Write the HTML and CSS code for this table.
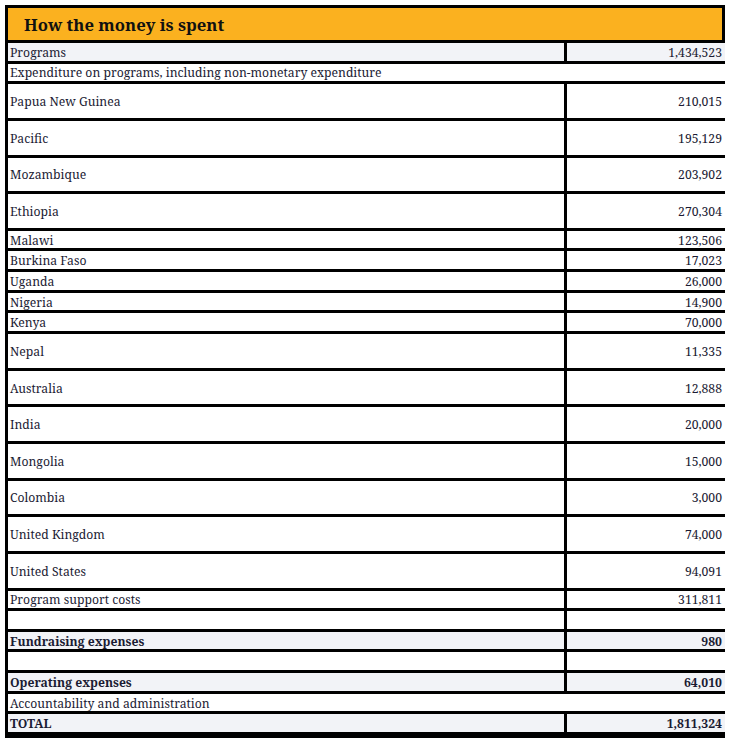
FILE: index.html
```html
<!DOCTYPE html>
<html lang="en">
<head>
<meta charset="utf-8">
<title>How the money is spent</title>
<link rel="stylesheet" href="styles.css">
</head>
<body>
<div class="sheet">
  <div class="title">How the money is spent</div>
  <div class="row alt"><div class="label">Programs</div><div class="num">1,434,523</div></div>
  <div class="row full"><div class="label">Expenditure on programs, including non-monetary expenditure</div></div>
  <div class="row tall"><div class="label">Papua New Guinea</div><div class="num">210,015</div></div>
  <div class="row tall"><div class="label">Pacific</div><div class="num">195,129</div></div>
  <div class="row tall"><div class="label">Mozambique</div><div class="num">203,902</div></div>
  <div class="row tall"><div class="label">Ethiopia</div><div class="num">270,304</div></div>
  <div class="row"><div class="label">Malawi</div><div class="num">123,506</div></div>
  <div class="row"><div class="label">Burkina Faso</div><div class="num">17,023</div></div>
  <div class="row"><div class="label">Uganda</div><div class="num">26,000</div></div>
  <div class="row"><div class="label">Nigeria</div><div class="num">14,900</div></div>
  <div class="row"><div class="label">Kenya</div><div class="num">70,000</div></div>
  <div class="row tall"><div class="label">Nepal</div><div class="num">11,335</div></div>
  <div class="row tall"><div class="label">Australia</div><div class="num">12,888</div></div>
  <div class="row tall"><div class="label">India</div><div class="num">20,000</div></div>
  <div class="row tall"><div class="label">Mongolia</div><div class="num">15,000</div></div>
  <div class="row tall"><div class="label">Colombia</div><div class="num">3,000</div></div>
  <div class="row tall"><div class="label">United Kingdom</div><div class="num">74,000</div></div>
  <div class="row tall"><div class="label">United States</div><div class="num">94,091</div></div>
  <div class="row"><div class="label">Program support costs</div><div class="num">311,811</div></div>
  <div class="row"><div class="label"></div><div class="num"></div></div>
  <div class="row alt bold"><div class="label">Fundraising expenses</div><div class="num">980</div></div>
  <div class="row"><div class="label"></div><div class="num"></div></div>
  <div class="row alt bold"><div class="label">Operating expenses</div><div class="num">64,010</div></div>
  <div class="row full"><div class="label">Accountability and administration</div></div>
  <div class="row alt bold"><div class="label">TOTAL</div><div class="num">1,811,324</div></div>
</div>
</body>
</html>
```

FILE: styles.css
```css
html, body {
  margin: 0;
  padding: 0;
  background: #ffffff;
}

.sheet {
  margin: 5px 0 0 5px;
  width: 717px;
  border-left: 3px solid #000;
  border-bottom: 3px solid #000;
  font-family: "Noto Serif", "DejaVu Serif Condensed", "DejaVu Serif", serif;
  font-size: 12.2px;
  color: #1b1b33;
}

.title {
  box-sizing: border-box;
  height: 38px;
  margin-left: -3px;
  width: 720px;
  border: 3px solid #000;
  background: #fbb11f;
  color: #111;
  font-weight: bold;
  font-size: 16.7px;
  padding-left: 16px;
  display: flex;
  align-items: center;
}

.row {
  display: flex;
  height: 20.65px;
  box-sizing: border-box;
  border-bottom: 3px solid #000;
  background: #fff;
}

.row.tall {
  height: 36.65px;
}

.row.alt {
  background: #f2f3f7;
}

.row.bold {
  font-weight: bold;
}

.label {
  box-sizing: border-box;
  width: 559px;
  border-right: 3px solid #000;
  padding: 1px 0 0 2px;
  display: flex;
  align-items: center;
  white-space: nowrap;
}

.row.full .label {
  width: 100%;
  border-right: 0;
}

.num {
  flex: 1;
  box-sizing: border-box;
  padding: 1px 3px 0 0;
  display: flex;
  align-items: center;
  justify-content: flex-end;
}
```
